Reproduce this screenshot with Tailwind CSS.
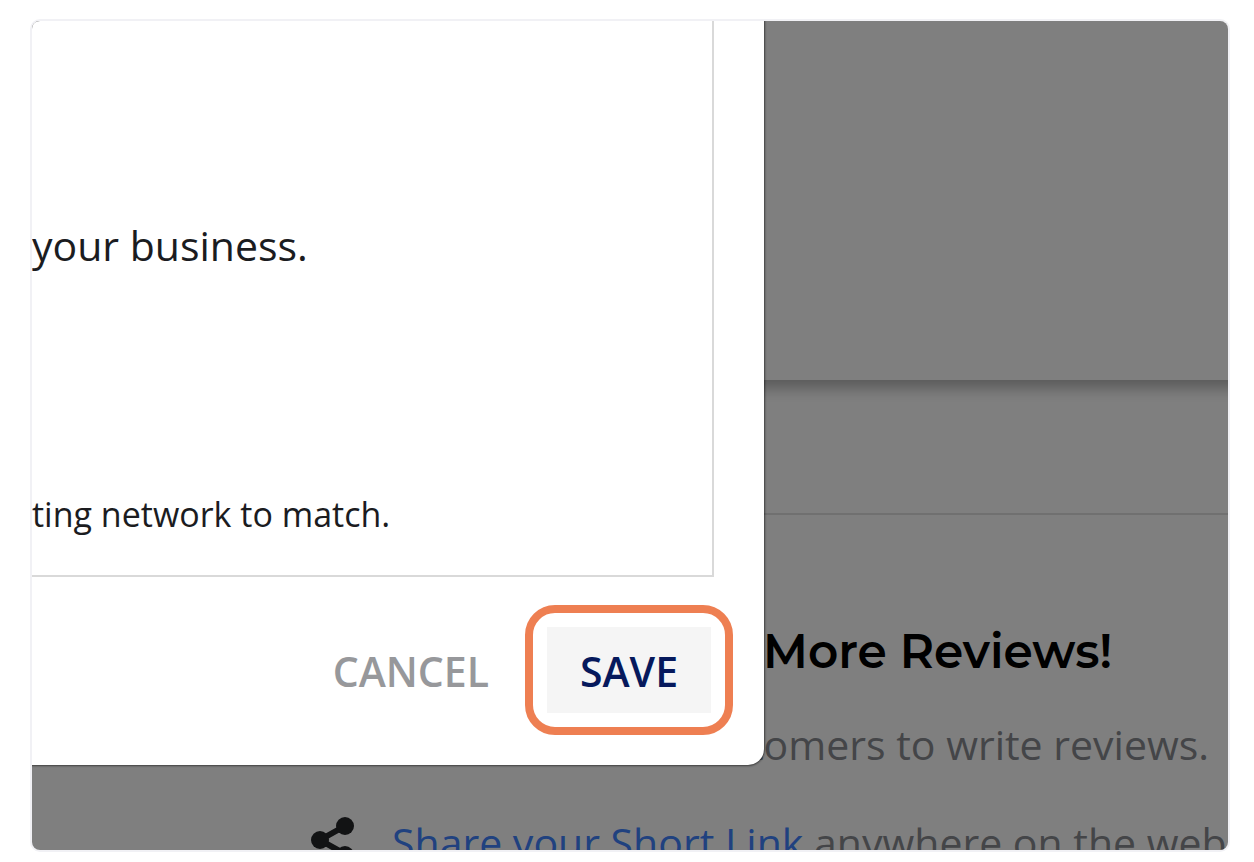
<!DOCTYPE html>
<html lang="en">
<head>
    <meta charset="UTF-8">
    <meta name="viewport" content="width=device-width, initial-scale=1.0">
    <title>Get More Reviews</title>
    <script src="https://cdn.jsdelivr.net/npm/@tailwindcss/browser@4"></script>
</head>
<body class="bg-white font-['Open_Sans','Noto_Sans',sans-serif]">
    <div class="flex h-screen pt-[19px] pr-6 pb-[10px] pl-[30px]">
        <main class="relative flex-1 overflow-hidden rounded-[10px] border-2 border-[#f1f1f5] bg-white">

            <!-- Page behind the dialog -->
            <div class="flex h-full flex-col whitespace-nowrap">
                <div class="-mx-8 h-[359px] shrink-0 bg-white shadow-[0_4px_14px_4px_rgba(0,0,0,0.3)]"></div>
                <div class="mt-[133px] border-t-2 border-[#e0e0e0]"></div>
                <section class="pt-[105px]">
                    <h2 class="pl-[731px] font-['Montserrat','Inter',sans-serif] text-[47px] leading-[64px] font-semibold text-black">More Reviews!</h2>
                    <p class="mt-[30px] pl-[717px] text-[41px] leading-[60px] text-[#888b90]">tomers to write reviews.</p>
                    <div class="mt-[38px] flex items-center pl-[279px]">
                        <svg class="h-12 w-[43px] shrink-0 overflow-visible" viewBox="0 0 43 48" fill="#242629" aria-hidden="true">
                            <path d="M34 8 9 22l25 14" fill="none" stroke="#242629" stroke-width="6"/>
                            <circle cx="34" cy="8" r="9"/>
                            <circle cx="9" cy="22" r="9"/>
                            <circle cx="34" cy="37" r="9"/>
                        </svg>
                        <p class="ml-[38px] text-[41px] leading-[60px] text-[#888b90]"><a href="#" class="text-[#4083ff]">Share your Short Link</a> anywhere on the web</p>
                    </div>
                </section>
            </div>

            <div class="absolute inset-0 bg-black/50"></div>

            <!-- Dialog -->
            <div role="dialog" aria-modal="true" class="absolute top-0 left-0 w-[732px] rounded-br-2xl bg-white pb-[30px] whitespace-nowrap shadow-[0_0_2px_1px_rgba(0,0,0,0.5)]">
                <div class="mr-[50px] border-r-2 border-b-2 border-[#d9d9d9] pt-[194px] pb-9 text-[#1b1c1f]">
                    <p class="text-[41px] leading-[60px]">your business.</p>
                    <p class="mt-[214px] text-[34px] leading-[50px]">ting network to match.</p>
                </div>
                <div class="mt-7 mr-[31px] flex items-center justify-end gap-1 text-[41px] leading-[60px] font-semibold">
                    <button type="button" class="px-8 pt-[14px] pb-3 text-[#97989b]">CANCEL</button>
                    <div class="rounded-[30px] border-8 border-[#ee7f52] p-[14px]">
                        <button type="button" class="min-w-[164px] bg-[#f5f5f5] px-8 pt-[14px] pb-3 text-[#06195c]">SAVE</button>
                    </div>
                </div>
            </div>
        </main>
    </div>
</body>
</html>
